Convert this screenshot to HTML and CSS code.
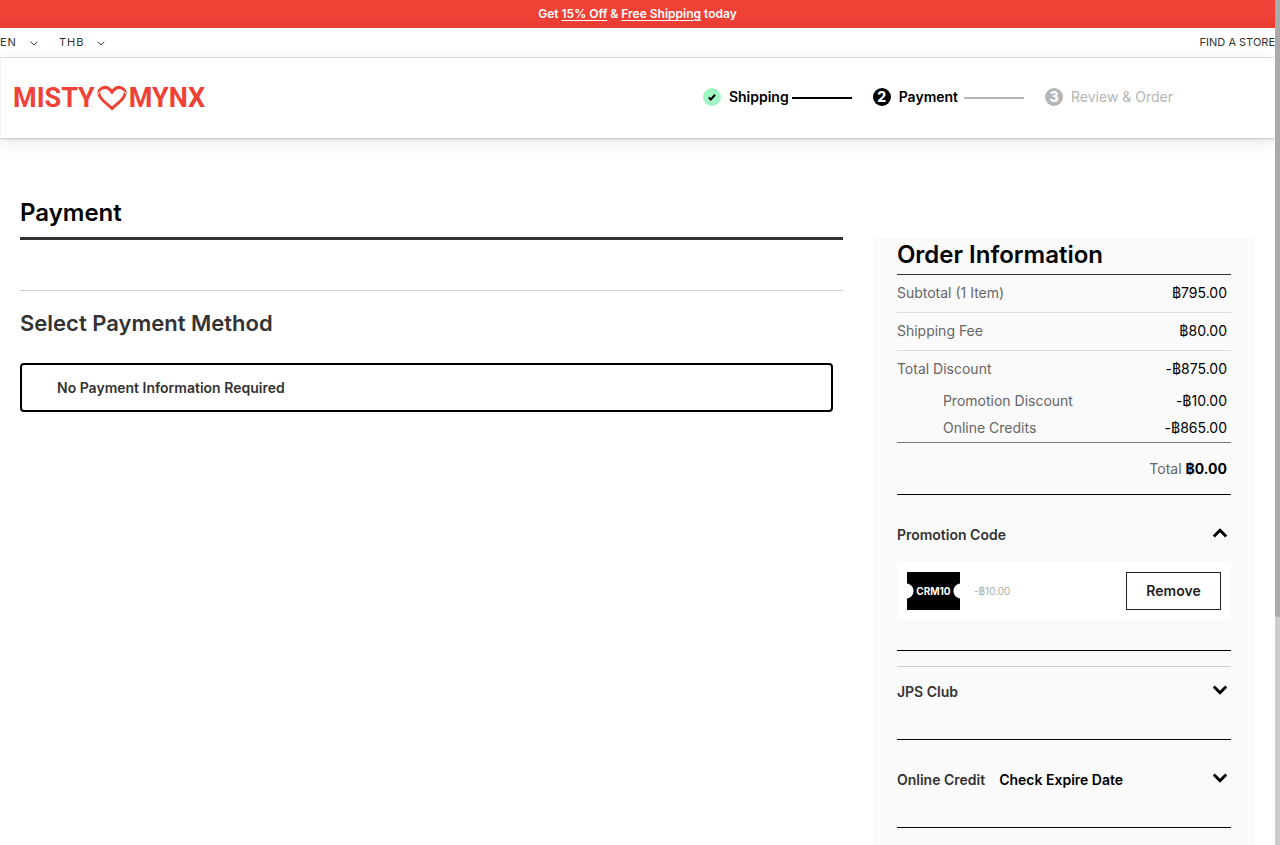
FILE: index.html
```html
<!DOCTYPE html>
<html lang="en">
<head>
<meta charset="utf-8">
<meta name="viewport" content="width=device-width, initial-scale=1">
<title>Payment - Misty Mynx</title>
<link rel="stylesheet" href="styles.css">
</head>
<body>
<div class="banner">Get <a href="#">15% Off</a> &amp; <a href="#">Free Shipping</a> today</div>
<nav class="topbar">
  <div class="switchers">
    <button class="switch" type="button">EN
      <svg class="caret" viewBox="0 0 8 5"><path d="M.7.8 4 4.1 7.3.8"/></svg>
    </button>
    <button class="switch" type="button">THB
      <svg class="caret" viewBox="0 0 8 5"><path d="M.7.8 4 4.1 7.3.8"/></svg>
    </button>
  </div>
  <a class="store" href="#">FIND A STORE</a>
</nav>
<header class="header">
  <a class="logo" href="#"><span>MISTY</span>
    <svg class="heart" viewBox="0 0 30 26"><path class="heart-line" d="M15 23.500 5.500 15C1 10.500 1 6 4 3.800c4-2.800 8-.8 11 3.200 3-4 7-6 11-3.200 3 2.200 3 6.700-1.500 11.200z"/><path class="heart-cut" d="M1 9C2 7 4 5.800 7 5.500M29 9c-1-2-3-3.200-6-3.500"/></svg>
    <span>MYNX</span></a>
  <ol class="steps">
    <li class="step">
      <svg class="dot done" viewBox="0 0 18 18"><circle cx="9" cy="9" r="9"/><path d="m5.800 9.300 2 2.200 4.300-4.700"/></svg>
      <span>Shipping</span><i class="line"></i>
    </li>
    <li class="step" aria-current="step">
      <span class="dot number">2</span><span>Payment</span><i class="line spaced"></i>
    </li>
    <li class="step pending"><span class="dot number">3</span><span>Review &amp; Order</span></li>
  </ol>
</header>
<main class="page">
  <section class="payment">
    <h1 class="title">Payment</h1>
    <h2 class="subtitle">Select Payment Method</h2>
    <div class="notice">No Payment Information Required</div>
  </section>
  <aside class="order">
    <h2 class="order-title">Order Information</h2>
    <dl class="sums">
      <div class="sum"><dt>Subtotal (1 Item)</dt><dd>฿795.00</dd></div>
      <div class="sum"><dt>Shipping Fee</dt><dd>฿80.00</dd></div>
      <div class="sum last"><dt>Total Discount</dt><dd>-฿875.00</dd></div>
      <div class="sum detail"><dt>Promotion Discount</dt><dd>-฿10.00</dd></div>
      <div class="sum detail"><dt>Online Credits</dt><dd>-฿865.00</dd></div>
      <div class="total"><dt>Total</dt><dd>฿0.00</dd></div>
    </dl>
    <section class="promo">
      <button class="toggle" type="button" aria-expanded="true"><span>Promotion Code</span>
        <svg class="chevron" viewBox="0 0 16 10"><path d="m1.800 8.500 6.200-6.200 6.200 6.200"/></svg>
      </button>
      <div class="coupon">
        <span class="ticket">CRM10</span>
        <span class="saving">-฿10.00</span>
        <button class="remove" type="button">Remove</button>
      </div>
    </section>
    <section class="club">
      <button class="toggle" type="button" aria-expanded="false"><span>JPS Club</span>
        <svg class="chevron" viewBox="0 0 16 10"><path d="m1.800 1.500 6.200 6.200 6.200-6.200"/></svg>
      </button>
    </section>
    <section class="credit">
      <div class="credit-row">
        <span>Online Credit</span><a class="expire" href="#">Check Expire Date</a>
        <button class="toggle icon" type="button" aria-expanded="false" aria-label="Online Credit">
          <svg class="chevron" viewBox="0 0 16 10"><path d="m1.800 1.500 6.200 6.200 6.200-6.200"/></svg>
        </button>
      </div>
    </section>
  </aside>
</main>
<div class="scrollbar" aria-hidden="true"><div class="thumb"></div></div>
</body>
</html>
```
FILE: styles.css
```css
* { box-sizing: border-box; }
body {
  margin: 0;
  padding-right: 5px;
  background: #fff;
  color: #333;
  font: 14px/20px Inter, "Noto Sans", sans-serif;
}
button { padding: 0; border: 0; background: none; color: inherit; font: inherit; cursor: pointer; }
a { color: inherit; text-decoration: none; }
h1, h2, dl, dd, ol { margin: 0; padding: 0; }
svg { display: block; fill: none; stroke: currentColor; }

.banner {
  height: 28px;
  background: linear-gradient(#f04136 50%, #e63d33);
  color: #fff;
  font-size: 12px;
  font-weight: 600;
  line-height: 28px;
  text-align: center;
}
.banner a { text-decoration: underline; text-underline-offset: 2px; }

.topbar {
  display: flex;
  justify-content: space-between;
  align-items: center;
  height: 30px;
  padding-bottom: 1px;
  border-bottom: 1px solid #e6e6e6;
  font-size: 11px;
}
.switchers { display: flex; gap: 21px; }
.switch { display: flex; align-items: center; gap: 13px; letter-spacing: 1px; }
.caret { width: 8px; height: 5px; margin-top: 2px; }

.header {
  display: flex;
  justify-content: space-between;
  align-items: center;
  height: 80px;
  padding: 0 102px 2px 12px;
  border-left: 1px solid #f2f2f2;
  box-shadow: 0 1px 2px #0003, 0 4px 16px #0000001a;
}
.logo {
  display: flex;
  align-items: center;
  gap: 2px;
  padding-top: 2px;
  color: #f04136;
  font: 700 27px/40px Roboto, "Liberation Sans", sans-serif;
}
.heart { width: 30px; height: 26px; }
.heart-line { stroke-width: 3; }
.heart-cut { stroke: #fff; stroke-width: 1; }

.steps { display: flex; gap: 21px; list-style: none; }
.step { display: flex; align-items: center; color: #000; font-weight: 600; }
.step .dot { width: 18px; height: 18px; margin-right: 8px; }
.done circle { fill: #a1f5c3; stroke: none; }
.done path { stroke-width: 2; }
.number { border-radius: 50%; background: #000; color: #fff; font-weight: 800; line-height: 18px; text-align: center; }
.line { width: 60px; height: 2px; margin: 2px 0 0 3px; background: currentColor; }
.spaced { margin-left: 6px; background: #b5b5b5; }
.pending { color: #b5b5b5; font-weight: 400; }
.pending .number { background: #b5b5b5; }

.page { display: grid; grid-template-columns: 28fr 13fr; gap: 30px; padding: 60px 20px 0; }
.title { padding: 0 0 9px; border-bottom: 3px solid #333; color: #000; font-size: 24px; font-weight: 600; line-height: 30px; }
.subtitle { margin-top: 50px; padding-top: 17px; border-top: 1px solid #ccc; font-size: 22px; font-weight: 600; line-height: 30px; }
.notice { margin: 25px 10px 0 0; padding: 12px 35px; border: 2px solid #000; border-radius: 4px; font-weight: 600; line-height: 21px; }

.order { margin-top: 40px; padding: 0 24px 17px; background: #fafafa; }
.order-title { padding: 2px 0 4px; border-bottom: 1px solid #333; color: #000; font-size: 24px; font-weight: 600; line-height: 30px; }
.sum { display: flex; justify-content: space-between; height: 38px; padding-right: 4px; border-bottom: 1px solid #ddd; line-height: 36px; }
.sums dt { color: #666; }
.sums dd { color: #000; }
.sum.last { height: 37px; border: 0; }
.sum.detail { height: 27px; padding-left: 46px; border: 0; line-height: 26px; }
.total { display: flex; justify-content: flex-end; gap: 4px; padding: 15px 4px; border-top: 1px solid #777; border-bottom: 1px solid #000; line-height: 21px; }
.total dd { font-weight: 700; }

.toggle { display: flex; justify-content: space-between; align-items: flex-start; width: 100%; padding-right: 3px; font-weight: 600; }
.chevron { width: 16px; height: 10px; margin-top: 3px; color: #000; stroke-width: 3; }
.promo { padding: 30px 0; border-bottom: 1px solid #000; }
.coupon { display: flex; align-items: center; margin-top: 17px; padding: 10px; background: #fff; font-size: 10px; }
.ticket {
  width: 53px;
  height: 38px;
  background: radial-gradient(circle at -1px 19px, #fff 7px, transparent 8px), radial-gradient(circle at 54px 19px, #fff 7px, transparent 8px), #000;
  color: #fff;
  font-weight: 700;
  line-height: 38px;
  text-align: center;
}
.saving { margin-left: 14px; color: #aaa; }
.remove { width: 95px; height: 38px; margin-left: auto; border: 1px solid #222; background: #fff; color: #222; font-size: 14px; font-weight: 600; }
.club { margin-top: 15px; padding: 15px 0 37px; border-top: 1px solid #ccc; border-bottom: 1px solid #000; }
.credit { padding: 30px 0 37px; border-bottom: 1px solid #000; }
.credit-row { display: flex; align-items: flex-start; font-weight: 600; }
.expire { margin-left: 14px; color: #000; }
.icon { width: auto; margin-left: auto; }

.scrollbar { position: fixed; top: 0; right: 0; bottom: 0; width: 5px; background: #ccc; }
.thumb { height: 73%; border-radius: 0 0 2px 2px; background: #aaa; }
```
